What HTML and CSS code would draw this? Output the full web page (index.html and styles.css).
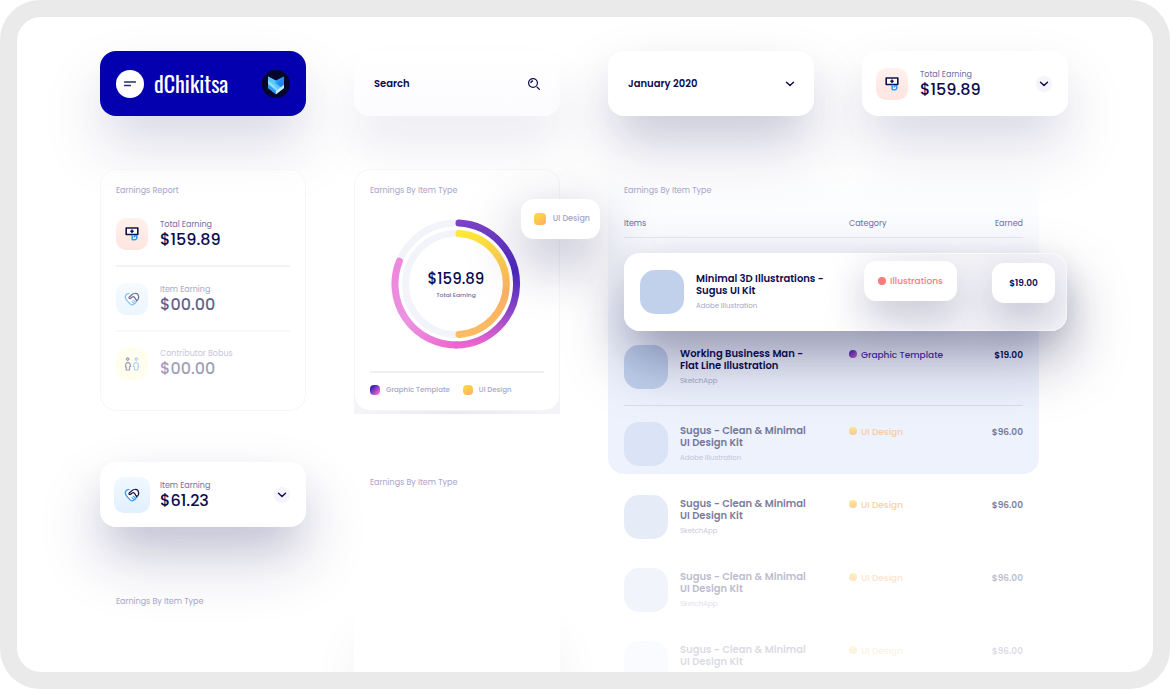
FILE: index.html
```html
<!DOCTYPE html>
<html lang="en">
<head>
<meta charset="utf-8">
<meta name="viewport" content="width=device-width, initial-scale=1">
<title>dChikitsa – Earnings</title>
<link rel="stylesheet" href="styles.css">
</head>
<body>
<svg class="defs" width="0" height="0" aria-hidden="true">
  <defs>
    <symbol id="i-chevron" viewBox="0 0 10 10"><path d="M1.500 3.200 5 6.600 8.500 3.200" fill="none" stroke="#0c0c4f" stroke-width="1.400" stroke-linecap="round" stroke-linejoin="round"/></symbol>
    <symbol id="i-cash" viewBox="0 0 16 16">
      <path d="M2.200 2h11.600v6.500H2.200z" fill="#fff" stroke="#11114a" stroke-width="1.600" stroke-linejoin="round"/>
      <path d="M6.300 5.250h3.400M8 3.600v3.300" stroke="#11114a" stroke-width="1.500"/>
      <path d="M8.200 8.800v5M8.200 13.800h2.200c1.300 0 2.300-.9 2.400-2V9.700h-2l-.6 1.800" fill="#fff" stroke="#2d95f5" stroke-width="1.500" stroke-linejoin="round"/>
    </symbol>
    <symbol id="i-hands" viewBox="0 0 16 16">
      <path d="M5 2.600C2.600 2.400 1 4.400 1.400 6.700c.4 2.200 2.100 3.400 3.700 5 .9.900 1.600 2.200 2.900 2.200 1.200 0 1.700-.8 2.300-1.200.9-.3 1.300-.9 1.600-1.500.8-.3 1-.9 1.100-1.600" fill="#fff" stroke="#3a9af3" stroke-width="1.300" stroke-linecap="round"/>
      <path d="M9.800 12.300 8 10.600M11.300 11 9.300 9.100" stroke="#3a9af3" stroke-width="1.100" stroke-linecap="round"/>
      <path d="M12.600 9.600c1.600-.9 2.300-2.600 2-4.200-.4-2-2-3.100-3.900-2.900-1.700.1-2.700 1-3.700 2L5 6.300c-.4.800.5 1.700 1.400 1.200L8.300 6c.9-.6 1.500-.4 2.100.2l2.200 3.400" fill="#fff" stroke="#11114a" stroke-width="1.200" stroke-linecap="round" stroke-linejoin="round"/>
    </symbol>
    <symbol id="i-people" viewBox="0 0 16 16">
      <g fill="none" stroke-width="1.200" stroke-linejoin="round">
        <path d="M3.700 1.600 5.200 3.100 3.700 4.600 2.200 3.100zM2.200 14H5.500V10.500H6.600C6.600 8 5.600 6.600 3.900 6.600S1.600 8 1.600 9.500V11h.6z" stroke="#11114a"/>
        <path d="M12.300 1.600 13.800 3.100 12.300 4.600 10.800 3.100zM13.800 14h-3.300v-3.500H9.400C9.400 8 10.400 6.600 12.100 6.600s2.300 1.400 2.300 2.900V11h-.6z" stroke="#3a9af3"/>
      </g>
    </symbol>
  </defs>
</svg>

<div class="frame">
  <main class="board">
    <header class="card brand">
      <button class="round-button" type="button" aria-label="Menu">
        <svg width="14" height="8" viewBox="0 0 14 8" aria-hidden="true"><path d="M1.500 2h11M1.500 5.500h6" stroke="#2b2b6b" stroke-width="1.300" stroke-linecap="round"/></svg>
      </button>
      <h1 class="brand-name">dChikitsa</h1>
      <svg class="brand-mark" width="28" height="28" viewBox="0 0 28 28" aria-hidden="true">
        <circle cx="14" cy="14" r="14" fill="#06062c"/>
        <path d="M6 6.500 13.700 10.500 22 6.500V18l-8 6.200L6 18z" fill="#2a9cf2"/>
        <path d="M6 6.500 13.700 10.500v2.800l5 4.200-4.700 3.500L6 14z" fill="#5ac6fb"/>
        <path d="M6 10.500 12 15l3.500 4.500L14 21 6 15z" fill="#8fdcff"/>
        <path d="M6 14l8 6.500v3.700L6 18z" fill="#2a9cf2"/>
        <path d="M14 21 22 14.500V18l-8 6.200z" fill="#c4f1fb"/>
        <path d="M22 6.500v8L19 17l-3.500-3.700z" fill="#2487ec"/>
      </svg>
    </header>

    <form class="card search" role="search">
      <input class="search-input" type="search" placeholder="Search" aria-label="Search">
      <button class="plain-button" type="button" aria-label="Run search">
        <svg width="14" height="14" viewBox="0 0 14 14" aria-hidden="true"><circle cx="6" cy="6" r="4.400" fill="none" stroke="#0c0c4f" stroke-width="1.200"/><path d="M3.900 5.600C4.100 4.700 4.600 4.200 5.500 4M10.200 10.200l2.200 2.200" fill="none" stroke="#0c0c4f" stroke-width="1.300" stroke-linecap="round"/></svg>
      </button>
    </form>

    <button class="card month" type="button">
      <span>January 2020</span>
      <svg width="10" height="10" aria-hidden="true"><use href="#i-chevron"/></svg>
    </button>

    <section class="card summary">
      <span class="tile tile-peach"><svg width="16" height="16" aria-hidden="true"><use href="#i-cash"/></svg></span>
      <p class="stat"><span class="stat-label">Total Earning</span><strong class="stat-value">$159.89</strong></p>
      <button class="round-button small" type="button" aria-label="Show more"><svg width="10" height="10" aria-hidden="true"><use href="#i-chevron"/></svg></button>
    </section>

    <div class="column">
      <section class="panel report">
        <h2 class="caption">Earnings Report</h2>
        <ul class="report-list">
          <li class="report-row">
            <span class="tile tile-peach"><svg width="16" height="16" aria-hidden="true"><use href="#i-cash"/></svg></span>
            <p class="stat"><span class="stat-label">Total Earning</span><strong class="stat-value">$159.89</strong></p>
          </li>
          <li class="report-row dim">
            <span class="tile tile-sky"><svg width="16" height="16" aria-hidden="true"><use href="#i-hands"/></svg></span>
            <p class="stat"><span class="stat-label">Item Earning</span><strong class="stat-value">$00.00</strong></p>
          </li>
          <li class="report-row dimmer">
            <span class="tile tile-lemon"><svg width="16" height="16" aria-hidden="true"><use href="#i-people"/></svg></span>
            <p class="stat"><span class="stat-label">Contributor Bobus</span><strong class="stat-value">$00.00</strong></p>
          </li>
        </ul>
      </section>
      <section class="card summary item-summary">
        <span class="tile tile-sky"><svg width="16" height="16" aria-hidden="true"><use href="#i-hands"/></svg></span>
        <p class="stat"><span class="stat-label">Item Earning</span><strong class="stat-value">$61.23</strong></p>
        <button class="round-button small" type="button" aria-label="Show more"><svg width="10" height="10" aria-hidden="true"><use href="#i-chevron"/></svg></button>
      </section>
      <h2 class="caption loose">Earnings By Item Type</h2>
    </div>

    <div class="column">
      <section class="panel types">
        <h2 class="caption">Earnings By Item Type</h2>
        <figure class="donut">
          <svg viewBox="0 0 130 130" role="img" aria-label="Earnings split by item type">
            <defs>
              <linearGradient id="g-right" x1="0" y1="0" x2="0" y2="1"><stop offset="0" stop-color="#7b41c6"/><stop offset=".4" stop-color="#4a28bd"/><stop offset=".72" stop-color="#8b45c8"/><stop offset="1" stop-color="#ee66cf"/></linearGradient>
              <linearGradient id="g-left" x1="0" y1="0" x2="1" y2="1"><stop offset="0" stop-color="#ee86dc"/><stop offset=".45" stop-color="#ec92e2"/><stop offset="1" stop-color="#ee66cf"/></linearGradient>
              <linearGradient id="g-sun" x1="0" y1="0" x2="0" y2="1"><stop offset="0" stop-color="#ffe83a"/><stop offset=".6" stop-color="#fdb066"/><stop offset="1" stop-color="#fdbb62"/></linearGradient>
            </defs>
            <g fill="none" stroke-width="7" stroke-linecap="round">
              <circle cx="65" cy="65" r="61" stroke="#f2f4f9"/>
              <circle cx="65" cy="65" r="50.500" stroke="#f2f4f9"/>
              <path d="M65 126A61 61 0 0 1 8.400 42.200" stroke="url(#g-left)"/>
              <path d="M68 4.100A61 61 0 0 1 65 126" stroke="url(#g-right)"/>
              <path d="M68 14.600A50.500 50.500 0 0 1 68 115.400" stroke="url(#g-sun)"/>
            </g>
          </svg>
          <figcaption class="donut-label"><strong>$159.89</strong><span>Total Earning</span></figcaption>
        </figure>
        <ul class="legend">
          <li><span class="swatch violet"></span>Graphic Template</li>
          <li><span class="swatch sun"></span>UI Design</li>
        </ul>
        <div class="tooltip"><span class="swatch sun"></span>UI Design</div>
      </section>
      <h2 class="caption next-types">Earnings By Item Type</h2>
      <div class="ghost"></div>
    </div>

    <section class="items">
      <div class="items-panel">
        <h2 class="caption">Earnings By Item Type</h2>
        <table class="table">
          <thead>
            <tr class="head"><th scope="col">Items</th><th scope="col">Category</th><th scope="col">Earned</th></tr>
          </thead>
          <tbody>
            <tr class="row featured">
              <td class="item"><span class="thumb"></span><div><b>Minimal 3D Illustrations -<br>Sugus UI Kit</b><small>Adobe Illustration</small></div></td>
              <td class="category coral"><span class="bubble"><i class="dot"></i>Illustrations</span></td>
              <td class="earned"><span class="bubble">$19.00</span></td>
            </tr>
            <tr class="row second">
              <td class="item"><span class="thumb"></span><div><b>Working Business Man -<br>Flat Line Illustration</b><small>SketchApp</small></div></td>
              <td class="category violet-text"><i class="dot"></i>Graphic Template</td>
              <td class="earned">$19.00</td>
            </tr>
            <tr class="row fade-1">
              <td class="item"><span class="thumb"></span><div><b>Sugus - Clean &amp; Minimal<br>UI Design Kit</b><small>Adobe Illustration</small></div></td>
              <td class="category amber"><i class="dot"></i>UI Design</td>
              <td class="earned">$96.00</td>
            </tr>
          </tbody>
        </table>
      </div>
      <table class="table more" aria-label="More items">
        <tbody>
          <tr class="row fade-1">
            <td class="item"><span class="thumb"></span><div><b>Sugus - Clean &amp; Minimal<br>UI Design Kit</b><small>SketchApp</small></div></td>
            <td class="category amber"><i class="dot"></i>UI Design</td>
            <td class="earned">$96.00</td>
          </tr>
          <tr class="row fade-2">
            <td class="item"><span class="thumb"></span><div><b>Sugus - Clean &amp; Minimal<br>UI Design Kit</b><small>SketchApp</small></div></td>
            <td class="category amber"><i class="dot"></i>UI Design</td>
            <td class="earned">$96.00</td>
          </tr>
          <tr class="row fade-3">
            <td class="item"><span class="thumb"></span><div><b>Sugus - Clean &amp; Minimal<br>UI Design Kit</b></div></td>
            <td class="category amber"><i class="dot"></i>UI Design</td>
            <td class="earned">$96.00</td>
          </tr>
        </tbody>
      </table>
    </section>
  </main>
</div>
</body>
</html>
```

FILE: styles.css
```css
:root {
  --ink: #0c0c4f;
  --muted: #a5a5c8;
  --label: #6e6ea3;
  --line: #eeeff4;
}

* { box-sizing: border-box; }

body {
  margin: 0;
  background: #fff;
  color: var(--ink);
  font-family: Poppins, Inter, "Open Sans", sans-serif;
  font-size: 10px;
  line-height: 12px;
}

h1, h2, p, ul, figure { margin: 0; padding: 0; }
ul { list-style: none; }
button, input { font: inherit; color: inherit; border: 0; background: none; padding: 0; }
button { cursor: pointer; }
svg { display: block; flex: none; }
.defs { position: absolute; }

.frame {
  height: 100vh;
  border-radius: 40px;
  background: #eaeaea;
  padding: 17px;
}

.board {
  height: 100%;
  overflow: hidden;
  border-radius: 24px;
  background: #fff;
  padding: 34px 85px 0 83px;
  display: grid;
  grid-template-columns: repeat(4, minmax(0, 1fr));
  grid-template-rows: auto 1fr;
  gap: 53px 48px;
}

.card {
  min-height: 65px;
  border-radius: 16px;
  background: #fff;
  display: flex;
  align-items: center;
  box-shadow: 0 32px 64px rgba(30, 30, 100, .13), 0 20px 40px -10px rgba(30, 30, 100, .08);
}

.brand {
  background: #0400b0;
  gap: 10px;
  padding: 0 16px;
}

.brand-name {
  flex: 1;
  color: #fff;
  font-family: Oswald, "Liberation Sans Narrow", Roboto, sans-serif;
  font-size: 22px;
  line-height: 28px;
  padding-bottom: 2px;
  font-weight: 400;
}

.round-button {
  flex: none;
  width: 28px;
  height: 28px;
  border-radius: 50%;
  background: #fff;
  display: grid;
  place-items: center;
}
.round-button.small { width: 16px; height: 16px; background: #f4f4fa; }

.search, .month {
  padding: 0 19px 0 20px;
  justify-content: space-between;
  font-size: 10px;
  font-weight: 600;
  line-height: 14px;
}
.search { background: linear-gradient(#fff, #fcfcff); box-shadow: 0 32px 48px rgba(30, 30, 100, .08); }
.month { box-shadow: 0 32px 64px rgba(30, 30, 100, .18), 0 20px 40px -10px rgba(30, 30, 100, .12); }
.search-input { flex: 1; min-width: 0; outline: 0; appearance: none; }
.search-input::placeholder { color: var(--ink); opacity: 1; }

.summary { padding: 0 16px 0 14px; gap: 12px; }
.summary .stat { flex: 1; }

.tile {
  flex: none;
  width: 32px;
  height: 32px;
  border-radius: 10px;
  display: grid;
  place-items: center;
}
.tile-peach { background: linear-gradient(#fff1ed, #ffe4df); }
.tile-sky { background: linear-gradient(#f1f8ff, #e1f0ff); }
.tile-lemon { background: #fffbd6; }
.item-summary .tile { width: 36px; height: 36px; }
.item-summary {
  margin-top: 51px;
  gap: 10px;
  box-shadow: 0 32px 64px rgba(30, 30, 100, .2), 0 20px 40px -10px rgba(30, 30, 100, .16);
}

.stat { display: flex; flex-direction: column; padding-top: 2px; }
.stat-label { color: var(--label); font-size: 8px; line-height: 10px; }
.stat-value { font-size: 16px; line-height: 20px; font-weight: 500; }

.caption { color: var(--muted); font-size: 8px; line-height: 12px; font-weight: 400; }

.column { min-width: 0; isolation: isolate; }

.panel {
  position: relative;
  height: 242px;
  border: 1px solid #f6f6f9;
  border-radius: 16px;
  background: linear-gradient(rgba(255, 255, 255, .4), #fff 40px);
  padding: 15px;
}

.report-list { padding-top: 5px; }
.report-row {
  display: flex;
  align-items: center;
  gap: 12px;
  height: 65px;
  border-bottom: 2px solid #f3f3f6;
}
.report-row:nth-child(2) { border-bottom-color: #f8f8fa; }
.report-row:last-child { border-bottom: 0; height: 63px; }
.dim .tile, .dim .stat-label { opacity: .6; }
.dim .stat-value { opacity: .65; }
.dimmer .tile, .dimmer .stat-label { opacity: .4; }
.dimmer .stat-value { opacity: .4; }
.dimmer .stat { padding-top: 0; }

.loose { margin: 69px 16px 0; }

.types { display: flex; flex-direction: column; }
.types::after {
  content: "";
  position: absolute;
  z-index: -1;
  left: -1px;
  right: -1px;
  bottom: -4px;
  height: 20px;
  background: linear-gradient(90deg, #f4f4f8, #e9e9f1, #f4f4f8);
}
.donut {
  position: relative;
  align-self: center;
  width: 130px;
  margin: 22px 2px 0 0;
}
.donut-label {
  position: absolute;
  inset: 0;
  display: flex;
  flex-direction: column;
  align-items: center;
  justify-content: center;
  gap: 2px;
}
.donut-label strong { font-size: 15px; line-height: 20px; font-weight: 500; }
.donut-label span { color: var(--label); font-size: 6px; line-height: 8px; font-weight: 500; }

.legend {
  margin-top: 22px;
  padding-top: 11px;
  border-top: 2px solid var(--line);
  display: flex;
  gap: 13px;
  color: var(--muted);
  font-size: 7px;
  font-weight: 500;
  white-space: nowrap;
}
.legend li { display: flex; align-items: center; gap: 6px; }
.swatch { flex: none; width: 10px; height: 10px; border-radius: 4px; }
.violet { background: linear-gradient(135deg, #2d1cb5 15%, #ee66cf 85%); }
.sun { background: linear-gradient(150deg, #ffe03a, #fdab66); }

.tooltip {
  position: absolute;
  top: 29px;
  right: -41px;
  height: 40px;
  padding: 0 10px 0 13px;
  border-radius: 13px;
  background: #fff;
  display: flex;
  align-items: center;
  gap: 7px;
  color: var(--muted);
  font-size: 8px;
  font-weight: 500;
  white-space: nowrap;
  box-shadow: 0 20px 56px rgba(30, 30, 90, .38);
}
.tooltip .swatch { width: 12px; height: 12px; }

.next-types { margin: 66px 16px 0; }
.ghost {
  height: 140px;
  margin-top: 74px;
  border-radius: 16px;
  background: #fff;
  box-shadow: 0 72px 48px rgba(30, 30, 100, .05);
}

.items { grid-column: 3 / 5; min-width: 0; }
.items-panel {
  height: 305px;
  margin-right: 29px;
  padding: 16px 16px 0;
  border-radius: 16px;
  background: linear-gradient(rgba(238, 243, 254, 0), #edf2fd 72%);
}

.table { display: block; }
.table thead, .table tbody { display: block; }
.head, .row {
  display: grid;
  grid-template-columns: minmax(0, 1fr) 130px 44px;
}
.head {
  margin-top: 21px;
  padding-bottom: 7px;
  border-bottom: 1px solid #e6e8f0;
  color: var(--label);
  font-size: 8px;
}
.head th { padding: 0; font-weight: 400; text-align: left; }
.head th:last-child { text-align: right; }

.row { height: 73px; align-items: start; }
.row td { padding: 0; }
.item { display: flex; gap: 12px; }
.item b { display: block; padding-top: 3px; font-size: 10px; font-weight: 600; white-space: nowrap; }
.item small { display: block; margin-top: 4px; color: var(--muted); font-size: 7px; line-height: 10px; }
.thumb { flex: none; width: 44px; height: 44px; border-radius: 15px; background: #c1d1ec; }

.row .category, .row .earned { padding-top: 4px; white-space: nowrap; font-size: 9px; }
.earned { text-align: right; font-weight: 600; }
.category { font-weight: 500; }
.dot { display: inline-block; width: 8px; height: 8px; margin-right: 4px; border-radius: 50%; background: currentColor; }
.coral { color: #fb7a7a; }
.violet-text { color: #4a2bb5; }
.violet-text .dot { background: linear-gradient(135deg, #3a22b8, #e065cb); }
.amber { color: #fdb366; }
.amber .dot { background: linear-gradient(#ffe03a, #fdab66); }

.featured {
  position: relative;
  height: 78px;
  margin: 15px -44px 0 0;
  padding: 0 12px 0 16px;
  border-radius: 16px;
  grid-template-columns: minmax(0, 1fr) 128px 63px;
  background: linear-gradient(100deg, #fff 45%, #f1f1f6 80%, #f4f4f8);
  box-shadow: 0 28px 60px rgba(20, 20, 70, .36), 0 16px 44px -8px rgba(20, 20, 60, .12), inset 0 0 0 1px rgba(255, 255, 255, .7);
}
.featured .item { padding-top: 17px; }
.featured .category { padding-top: 8px; }
.featured .earned { padding-top: 10px; }
.bubble {
  display: inline-flex;
  align-items: center;
  justify-content: center;
  height: 40px;
  min-width: 63px;
  padding: 0 14px;
  border-radius: 12px;
  background: #fff;
  box-shadow: 0 16px 36px rgba(30, 30, 90, .22);
}

.second { height: 61px; margin-top: 14px; border-bottom: 1px solid #d9ddec; }
.items-panel .fade-1 { padding-top: 1px; margin-top: 15px; height: 53px; }
.fade-1 .item b, .fade-1 .earned { opacity: .55; }
.fade-1 .category, .fade-1 small { opacity: .6; }
.fade-1 .thumb { opacity: .42; }
.fade-2 .item b, .fade-2 .earned { opacity: .28; }
.fade-2 .category, .fade-2 small { opacity: .35; }
.fade-2 .thumb { opacity: .22; }
.fade-3 .item b, .fade-3 .earned { opacity: .15; }
.fade-3 .category { opacity: .18; }
.fade-3 .thumb { opacity: .08; }

.more { margin: 21px 45px 0 16px; }
```
